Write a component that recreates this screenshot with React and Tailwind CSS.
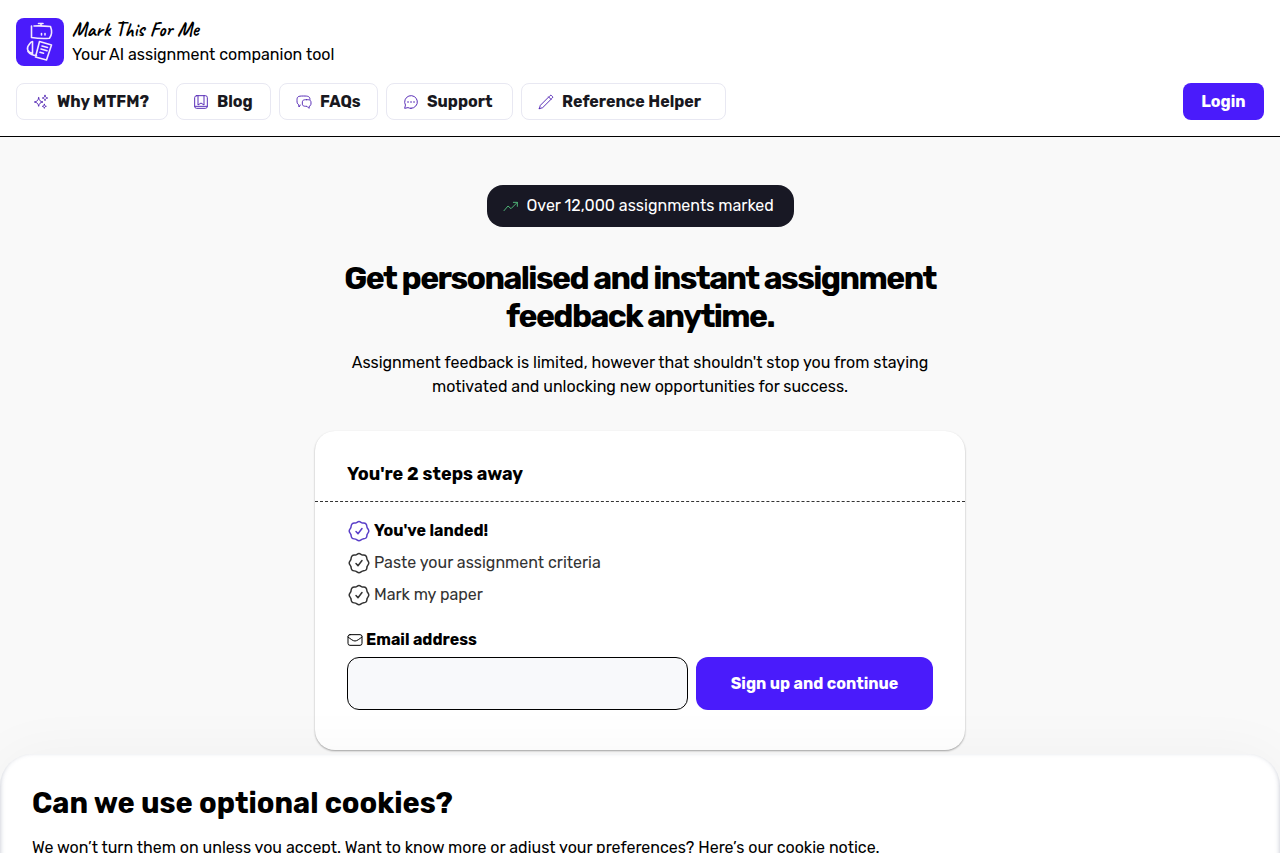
import { useState } from 'react';

const icons = {
  sparkles: (
    <>
      <path d="M8.500 5.500c.9 4.400 2.100 5.600 6.500 6.500-4.400.9-5.600 2.100-6.500 6.500-.9-4.400-2.100-5.600-6.500-6.500 4.400-.9 5.600-2.100 6.500-6.500z" />
      <path d="M18 2c.4 2.600 1.400 3.600 4 4-2.600.4-3.600 1.400-4 4-.4-2.600-1.400-3.600-4-4 2.600-.4 3.600-1.400 4-4z" />
      <path d="M17 15.500c.4 2.100 1 2.700 3 3-2 .4-2.600 1-3 3-.4-2-1-2.600-3-3 2-.3 2.600-.9 3-3z" />
    </>
  ),
  book: (
    <>
      <rect x="2.500" y="2.500" width="19" height="19" rx="3" />
      <path d="M7.500 2.500v14l4.500-3 4.500 3v-14M2.500 18.500h19" />
    </>
  ),
  chats: (
    <>
      <path d="M6.500 16.500L4.500 19.500 4 15.800C2 15 1.500 13.500 1.500 10 1.500 4 2.500 3 11 3c7.500 0 9.800.5 10 5" />
      <path d="M16 8.500c5.500 0 6.500.8 6.500 5 0 3-.5 4.200-2.500 4.700l-.5 3.300-3-3c-6 0-7-.8-7-5s1-5 6.500-5z" />
    </>
  ),
  bubble: (
    <>
      <path d="M12 21.500a9.500 9.500 0 1 0-8.300-4.900L2.500 21.500l5-1.100a9.500 9.500 0 0 0 4.500 1.100z" />
      <path d="M7.500 12h.1M12 12h.1M16.500 12h.1" strokeWidth="2.500" />
    </>
  ),
  pencil: <path d="M2 22l1.500-5L18 2.500a1.700 1.700 0 0 1 2.500 0l1 1a1.700 1.700 0 0 1 0 2.500L7 20.500 2 22zM16 4.500l3.500 3.500" />,
  trend: <path d="M1.500 19l6-7 4.500 4 9.500-9.500M15.500 6.500h6v6" />,
  badge: (
    <>
      <path d="M12 2.500c1.500 0 2.200 1.300 3.500 1.500s2.600-.1 3.500 1 .7 2.300 1.100 3.500 1.700 2 1.700 3.500-1.300 2.200-1.700 3.500.0 2.600-1.100 3.500-2.200.7-3.500 1.100-2 1.700-3.500 1.700-2.200-1.300-3.500-1.700-2.400 0-3.500-1.100-.7-2.200-1.100-3.500-1.700-2-1.700-3.500 1.300-2.200 1.700-3.500 0-2.400 1.100-3.500 2.200-.8 3.500-1 2-1.500 3.500-1.500z" />
      <path d="M9 12.500l2 2.200 4-5.200" />
    </>
  ),
  mail: (
    <>
      <rect x="1.500" y="4" width="21" height="16" rx="3" />
      <path d="M1.500 7.500c4 3 7.500 6 10.500 6s6.500-3 10.500-6" />
    </>
  ),
};

function Icon({ name, className }) {
  return (
    <svg viewBox="0 0 24 24" fill="none" stroke="currentColor" strokeWidth="1.5" strokeLinecap="round" strokeLinejoin="round" aria-hidden="true" className={className}>
      {icons[name]}
    </svg>
  );
}

function Logo() {
  return (
    <svg viewBox="0 0 48 48" fill="none" stroke="#f3e8ff" strokeWidth="1.6" strokeLinecap="round" strokeLinejoin="round" aria-hidden="true" className="size-12 shrink-0 rounded-lg bg-[#4a1bfb]">
      <path d="M22.500 5.500h4.500M25 5.500v2.500M15.500 8v11.500c6 1 12 1.300 18 .8 2.500-3.500 2.500-8 1-11.800-6-.6-11-.8-16.500-.5" />
      <path d="M25.500 15.500v1.500M29 15.500v1.500" />
      <path d="M16.500 23.500v12c-5.500-1.500-6.500-5.500-3-9.500 1-1.500 2-2.500 3-2.500z" />
      <path d="M23.500 23.500l12 3.500-5 15-11-3zM26 28l5.500 1.500M25 31l6 1.800M24 34.200l3.500 1M12 33.500c2 2.500 5 4 8.500 4" />
    </svg>
  );
}

const navItems = [
  { label: 'Why MTFM?', icon: 'sparkles', width: 'min-w-[152px]' },
  { label: 'Blog', icon: 'book', width: 'min-w-[95px]' },
  { label: 'FAQs', icon: 'chats', width: 'min-w-[99px]' },
  { label: 'Support', icon: 'bubble', width: 'min-w-[127px]' },
  { label: 'Reference Helper', icon: 'pencil', width: 'min-w-[205px]' },
];

const steps = [
  { label: "You've landed!", done: true },
  { label: 'Paste your assignment criteria', done: false },
  { label: 'Mark my paper', done: false },
];

export default function App() {
  const [email, setEmail] = useState('');

  return (
    <div className="flex h-screen flex-col overflow-hidden bg-[#f9f9f9] font-['Rubik','Inter',sans-serif] text-base text-black">
      {/* Header */}
      <header className="flex shrink-0 flex-col gap-4 border-b border-black bg-white p-4">
        <a href="#" className="flex items-center gap-2 self-start">
          <Logo />
          <span className="flex flex-col">
            <span className="font-['Caveat',cursive] text-xl leading-[27px] font-bold">Mark This For Me</span>
            <span>Your AI assignment companion tool</span>
          </span>
        </a>
        <div className="flex items-center justify-between">
          <nav className="flex gap-2">
            {navItems.map((item) => (
              <a key={item.label} href="#" className={`flex items-center gap-2 rounded-lg border border-[#e8e8f2] px-4 py-2 leading-[19px] font-bold text-[#181820] ${item.width}`}>
                <Icon name={item.icon} className="size-4 text-[#5a2fb8]" />
                {item.label}
              </a>
            ))}
          </nav>
          <a href="#" className="min-w-[81px] rounded-lg bg-[#4a1bfb] px-4 py-[9px] text-center leading-[19px] font-bold text-white">
            Login
          </a>
        </div>
      </header>

      {/* Hero */}
      <main className="flex shrink-0 flex-col items-center px-4 pt-12 pb-1">
        <div className="flex min-w-[307px] items-center gap-2 rounded-2xl bg-[#181824] px-4 py-[9px] text-white">
          <Icon name="trend" className="size-4 text-[#4fb477]" />
          Over 12,000 assignments marked
        </div>
        <h1 className="mt-8 max-w-[650px] text-center text-[32px] leading-[38px] font-bold tracking-tighter">
          Get personalised and instant assignment feedback anytime.
        </h1>
        <p className="mt-4 max-w-[650px] text-center">
          Assignment feedback is limited, however that shouldn't stop you from staying motivated and unlocking new opportunities for success.
        </p>

        <section className="mt-8 w-full max-w-[650px] rounded-[20px] bg-white shadow-[0_1px_2px_rgba(0,0,0,0.35)]">
          <h2 className="border-b border-dashed border-[#333333] px-8 pt-8 pb-4 text-lg leading-[22px] font-bold">You're 2 steps away</h2>
          <ul className="flex flex-col gap-2 px-8 pt-[17px]">
            {steps.map((step) => (
              <li key={step.label} className={step.done ? 'flex items-center gap-[3px] font-bold' : 'flex items-center gap-[3px] text-[#333333]'}>
                <Icon name="badge" className={step.done ? 'size-6 text-[#5a3fc8]' : 'size-6'} />
                {step.label}
              </li>
            ))}
          </ul>
          <form className="px-8 pt-[21px] pb-10" onSubmit={(e) => e.preventDefault()}>
            <label htmlFor="email" className="flex items-center gap-[3px] font-bold">
              <Icon name="mail" className="size-4" />
              Email address
            </label>
            <div className="mt-[5px] flex gap-2">
              <input id="email" type="email" value={email} onChange={(e) => setEmail(e.target.value)} className="h-[53px] min-w-0 flex-1 rounded-xl border border-black bg-[#f8f9fb] px-4" />
              <button type="submit" className="min-w-[237px] rounded-xl bg-[#4a1bfb] px-6 font-bold text-white">
                Sign up and continue
              </button>
            </div>
          </form>
        </section>
      </main>

      {/* Cookie notice */}
      <aside className="relative shrink-0 rounded-t-[32px] bg-white px-8 pt-8 pb-8 shadow-[0_0_60px_rgba(0,0,0,0.04),inset_0_-2px_5px_rgba(90,100,130,0.4)]">
        <h2 className="text-[29px] leading-[34px] font-bold">Can we use optional cookies?</h2>
        <p className="mt-4">
          We won’t turn them on unless you accept. Want to know more or adjust your preferences? Here’s our{' '}
          <a href="#">cookie notice.</a>
        </p>
      </aside>
    </div>
  );
}
